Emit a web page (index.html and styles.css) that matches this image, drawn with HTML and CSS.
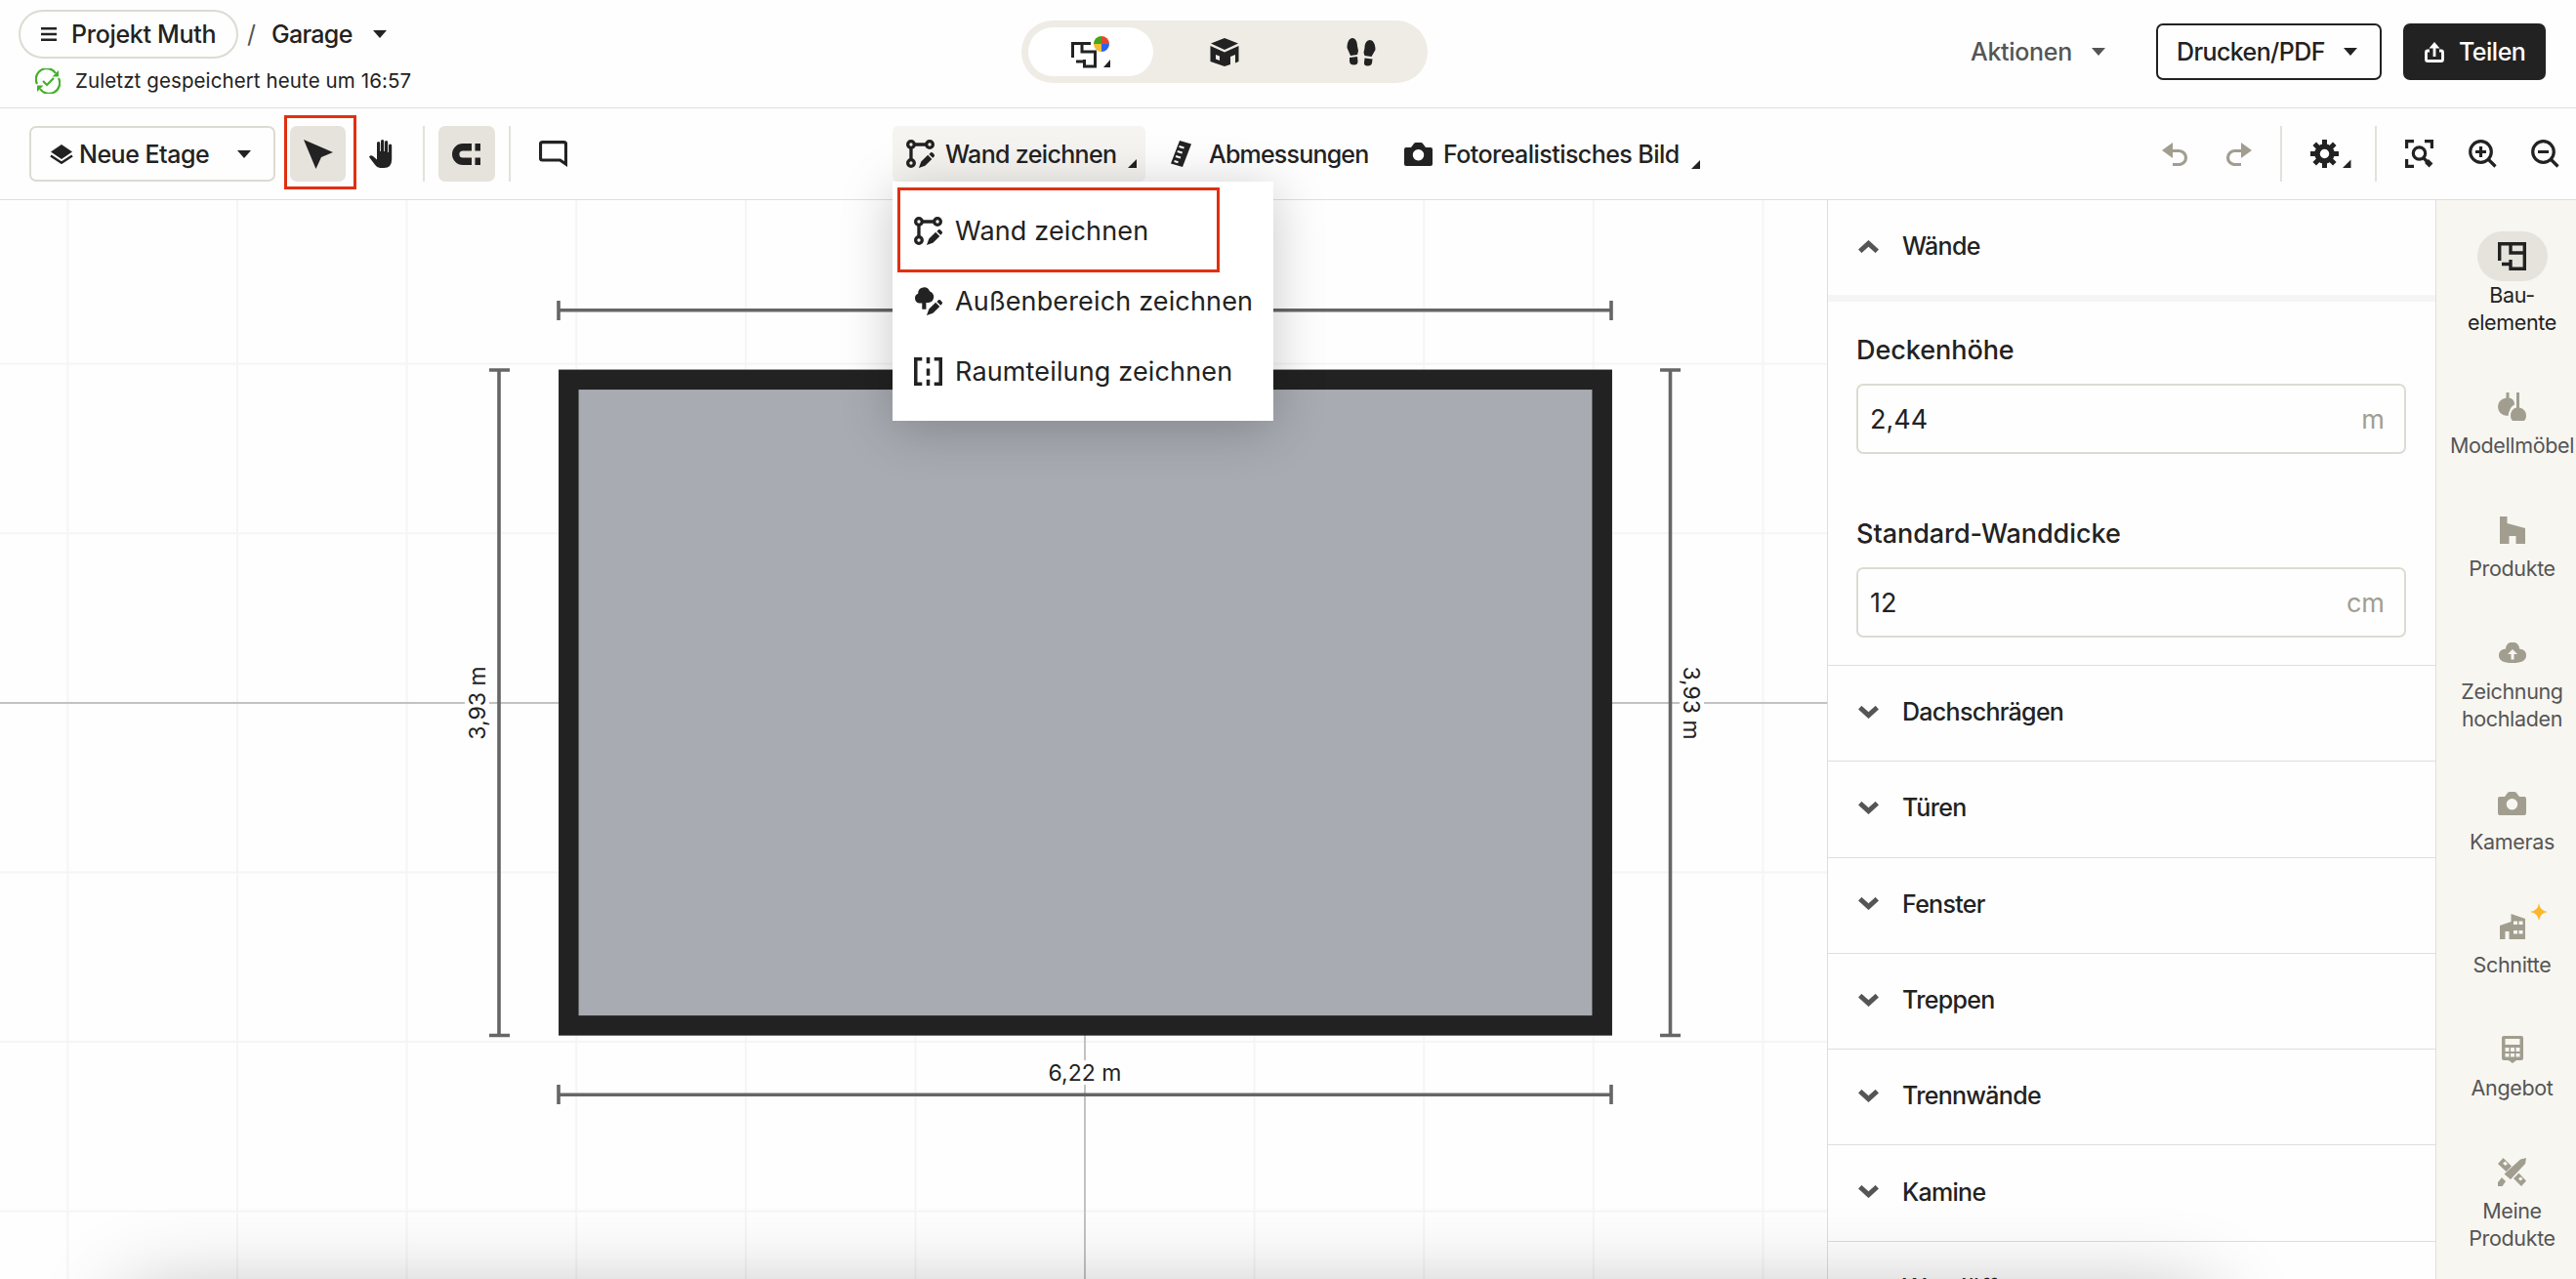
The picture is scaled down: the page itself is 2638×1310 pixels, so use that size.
FILE: index.html
```html
<!DOCTYPE html>
<html lang="de">
<head>
    <meta charset="UTF-8">
    <meta name="viewport" content="width=device-width, initial-scale=1.0">
    <title>Projekt Muth - Garage</title>
    <link rel="stylesheet" href="styles.css">
</head>
<body>
    <!-- Shared icons -->
    <svg class="sprite">
        <symbol id="caret" viewBox="0 0 14 8"><path d="M0 0h14L7 8z"/></symbol>
        <symbol id="corner" viewBox="0 0 9 9"><path d="M9 0v9H0z"/></symbol>
        <symbol id="pencil" viewBox="0 0 28 28">
            <path d="M12.5 28l2.300-6.200 6.600-6.600 4 4-6.700 6.600zM22.600 14.500l1.600-1.600q.9-.8 1.800 0l1.700 1.800q.9 1 0 1.900l-1.400 1.500z"/>
        </symbol>
        <symbol id="wall" viewBox="0 0 28 28">
            <g fill="none" stroke="currentColor" stroke-width="3.200">
                <circle cx="4.800" cy="4.800" r="3.200"/><circle cx="23.200" cy="4.800" r="3.200"/><circle cx="4.800" cy="23.200" r="3.200"/>
                <path d="M8 4.800h12.500M4.800 8v12.500"/>
            </g>
            <use href="#pencil" width="28" height="28"/>
        </symbol>
        <symbol id="camera" viewBox="0 0 29 24">
            <path fill-rule="evenodd" d="M2 5h5l3-4q.7-1 2-1h5q1.300 0 2 1l3 4h5q2 0 2 2v15q0 2-2 2H2q-2 0-2-2V7q0-2 2-2zM14.500 7a5.700 5.700 0 1 0 .01 0z"/>
        </symbol>
        <symbol id="down" viewBox="0 0 21 13"><path d="M1.700 1.700l8.800 8L19.300 1.700" fill="none" stroke="currentColor" stroke-width="5"/></symbol>
    </svg>

    <!-- Header -->
    <header class="header">
        <div class="project">
            <div class="crumbs">
                <button class="project-pill">
                    <svg width="16" height="14" viewBox="0 0 16 14"><path d="M0 1.200h16M0 7h16M0 12.800h16" stroke="currentColor" stroke-width="2.400"/></svg>
                    <span>Projekt Muth</span>
                </button>
                <span class="slash">/</span>
                <span class="plan-name">Garage</span>
                <svg class="caret"><use href="#caret"/></svg>
            </div>
            <div class="saved">
                <svg width="26" height="26" viewBox="0 0 26 26">
                    <path d="M2 16A11 11 0 0 1 21 5M24 10A11 11 0 0 1 5 21M8 13l4 4 7-7" fill="none" stroke="currentColor" stroke-width="2.200"/>
                    <path d="M24 2v6.500h-6.500zM2 24v-6.500h6.500z"/>
                </svg>
                <span>Zuletzt gespeichert heute um 16:57</span>
            </div>
        </div>
        <div class="modes">
            <button class="mode active">
                <svg width="40" height="34" viewBox="0 0 40 34">
                    <path d="M1.500 23V8.500H20M11 8.500v8.500h13.500v15H13.500v-7M5 27h8.500M11 8v8" fill="none" stroke="currentColor" stroke-width="3"/>
                    <path d="M31 9V1a8 8 0 0 1 8 8z" fill="#e8472f"/><path d="M31 9h8a8 8 0 0 1-8 8z" fill="#2d62ea"/>
                    <path d="M31 9v8a8 8 0 0 1-8-8z" fill="#f5bd32"/><path d="M31 9h-8a8 8 0 0 1 8-8z" fill="#43a51c"/>
                    <path d="M40 25v8h-7z"/>
                </svg>
            </button>
            <button class="mode">
                <svg width="30" height="29" viewBox="0 0 30 29"><path fill-rule="evenodd" d="M15 0l14 5.500L15 12 1 5.500zM.500 8L15 14.500 29.500 8v16l-3.500 1.500V17l-5 2v8L15 29 .500 24zM6 17v4.500l4 1.500v-4.500z"/></svg>
            </button>
            <button class="mode">
                <svg width="30" height="29" viewBox="0 0 30 29">
                    <path d="M.500 10C.500-3.500 11-2.500 11 8l1 5-1 4-7 1zM3 20l8-1 .500 5q0 3.500-4 3.500Q3.500 27.500 3 24z"/>
                    <path d="M29.500 12C29.500-1.500 18.500-.500 18.500 10l-1 5 1 3 7 1zM18.500 20.500l8 1-.5 4q-.5 3-4.500 3-4 0-3.500-3.500z"/>
                </svg>
            </button>
        </div>
        <div class="header-actions">
            <button class="actions">Aktionen <svg class="caret"><use href="#caret"/></svg></button>
            <button class="print">Drucken/PDF <svg class="caret"><use href="#caret"/></svg></button>
            <button class="share">
                <svg width="20" height="21" viewBox="0 0 20 21"><path d="M5 9H3q-1.500 0-1.500 1.500V18q0 1.500 1.500 1.500h14q1.500 0 1.500-1.500v-7.500Q18.500 9 17 9h-2M10 15V4" fill="none" stroke="currentColor" stroke-width="2.800"/><path d="M10 0l5.500 6.500h-11z"/></svg>
                <span>Teilen</span>
            </button>
        </div>
    </header>

    <!-- Toolbar -->
    <nav class="toolbar">
        <div class="tools-left">
            <button class="floor">
                <svg width="24" height="20" viewBox="0 0 24 20"><path d="M12 0l11 7.500L12 15 1 7.500z"/><path d="M1 11.500l11 7.200 11-7.200" fill="none" stroke="currentColor" stroke-width="2.500"/></svg>
                <span>Neue Etage</span>
                <svg class="caret"><use href="#caret"/></svg>
            </button>
            <button class="tool select">
                <svg width="30" height="30" viewBox="0 0 30 30"><path d="M0 0l30 13-12 5-5.500 12z"/></svg>
                <span class="marker"></span>
            </button>
            <button class="tool hand">
                <svg width="26" height="29" viewBox="0 0 26 29"><path d="M8 15V3.500a1.600 1.600 0 0 1 3.200 0V12h.800V1.600a1.600 1.600 0 0 1 3.200 0V12h.800V2.600a1.600 1.600 0 0 1 3.200 0V13h.800V6a1.600 1.600 0 0 1 3.200 0v14q0 9-8 9h-4q-3 0-5-3L.500 18.500q-.8-1.500.5-2 1.500-.5 3 .5l4 3.500z"/></svg>
            </button>
            <span class="divider"></span>
            <button class="tool magnet">
                <svg width="30" height="22" viewBox="0 0 30 22"><path d="M20 3.700H11a7.300 7.300 0 0 0 0 14.600h9M23.500 3.700H29M23.500 18.300H29" fill="none" stroke="currentColor" stroke-width="7.400"/></svg>
            </button>
            <span class="divider"></span>
            <button class="tool comment">
                <svg width="29" height="27" viewBox="0 0 29 27"><path d="M3.500 1.700h22q2 0 2 2V24l-6-4h-18q-2 0-2-2V3.700q0-2 2-2z" fill="none" stroke="currentColor" stroke-width="3.200"/></svg>
            </button>
        </div>
        <div class="tools-center">
            <div class="draw-wrap">
                <button class="draw">
                    <svg width="29" height="29"><use href="#wall"/></svg>
                    <span>Wand zeichnen</span>
                    <svg class="corner"><use href="#corner"/></svg>
                </button>
                <!-- Dropdown -->
                <ul class="menu">
                    <li>
                        <svg width="29" height="29"><use href="#wall"/></svg>
                        <span>Wand zeichnen</span>
                        <span class="marker"></span>
                    </li>
                    <li>
                        <svg width="29" height="29" viewBox="0 0 28 28"><path d="M8 22v-6H5a5 5 0 0 1-1-9.500A6 6 0 0 1 15.500 4a6 6 0 0 1 3 9Q17 15.500 12 15.500V22z"/><use href="#pencil" width="28" height="28"/></svg>
                        <span>Außenbereich zeichnen</span>
                    </li>
                    <li>
                        <svg width="29" height="29" viewBox="0 0 28 28"><path d="M8 1.700H1.700v24.600H8M20 1.700h6.300v24.600H20M14 0v6M14 11v7M14 22v6" fill="none" stroke="currentColor" stroke-width="3.400"/></svg>
                        <span>Raumteilung zeichnen</span>
                    </li>
                </ul>
            </div>
            <button class="measure">
                <svg width="21" height="27" viewBox="0 0 21 27"><path d="M9 0l12 3.500L12 27 0 23.500z"/><path d="M8.500 6l5 1.500M6.700 11l5 1.500M5 16l5 1.500M3.500 21l4 1.200" stroke="#fff" stroke-width="2"/></svg>
                <span>Abmessungen</span>
            </button>
            <button class="photo">
                <svg width="29" height="24"><use href="#camera"/></svg>
                <span>Fotorealistisches Bild</span>
                <svg class="corner"><use href="#corner"/></svg>
            </button>
        </div>
        <div class="tools-right">
            <svg class="history" width="27" height="24" viewBox="0 0 27 24"><path d="M8 8.500h9.500a7 7 0 0 1 0 14H11" fill="none" stroke="currentColor" stroke-width="3.200"/><path d="M11 0v16L0 8z"/></svg>
            <svg class="history redo" width="27" height="24" viewBox="0 0 27 24"><path d="M19 8.500H9.500a7 7 0 0 0 0 14H16" fill="none" stroke="currentColor" stroke-width="3.200"/><path d="M16 0v16l11-8z"/></svg>
            <span class="divider"></span>
            <svg class="gear" width="42" height="29" viewBox="0 0 42 29">
                <circle cx="14.500" cy="14.500" r="7.500" fill="none" stroke="currentColor" stroke-width="5.500"/>
                <path d="M14.500 0v6M14.500 23v6M0 14.500h6M23 14.500h6M4.200 4.200l4.500 4.500M20.300 20.300l4.500 4.500M4.200 24.800l4.500-4.500M20.300 8.700l4.500-4.500" stroke="currentColor" stroke-width="5"/>
                <path d="M41.500 20.500v8.500H33z"/>
            </svg>
            <span class="divider"></span>
            <svg class="line-icon fit" width="29" height="29" viewBox="0 0 29 29"><path d="M1.600 9V1.600H9M20 1.600h7.400V9M1.600 20v7.400H9"/><circle cx="14.500" cy="14" r="6.200"/><path d="M19 19l3.500 3.500"/><path d="M22 22l4.500 4.500" stroke-width="5.500"/></svg>
            <svg class="line-icon zoom-in" width="29" height="29" viewBox="0 0 29 29"><circle cx="12.500" cy="12.500" r="10.800"/><path d="M20 20l7.500 7.500M12.500 7v11M7 12.500h11"/></svg>
            <svg class="line-icon" width="29" height="29" viewBox="0 0 29 29"><circle cx="12.500" cy="12.500" r="10.800"/><path d="M20 20l7.500 7.500M7 12.500h11"/></svg>
        </div>
    </nav>

    <main class="workspace">
        <!-- Floor plan -->
        <svg class="plan" viewBox="0 205 1871 1105">
            <defs>
                <pattern id="grid" width="173.600" height="173.600" patternUnits="userSpaceOnUse" x="68.400" y="198">
                    <path d="M1 0v173.600M0 1h173.600" stroke="#f5f5f5" stroke-width="2"/>
                </pattern>
            </defs>
            <rect class="grid" y="205" width="1871" height="1105" fill="url(#grid)"/>
            <path class="axis" d="M0 720H1871M1111 1060V1310"/>
            <rect class="room" x="582.300" y="388.800" width="1058.400" height="661.600"/>
            <g class="dims">
                <path d="M572 317.800H1650M572 1121.300H1650M511 379V1060M1710.500 379V1060"/>
                <path d="M572 308v20M1650 308v20M572 1111v20M1650 1111v20M501 379h21M501 1060.500h21M1700 379h21M1700 1060.500h21"/>
            </g>
            <rect class="gap" x="1069" y="1086" width="84" height="25"/>
            <rect class="gap" x="476" y="680" width="25" height="80"/>
            <rect class="gap" x="1720" y="680" width="25" height="80"/>
            <text class="length" x="1111" y="1107">6,22 m</text>
            <text class="length" transform="translate(497 720) rotate(-90)">3,93 m</text>
            <text class="length" transform="translate(1724 720) rotate(90)">3,93 m</text>
        </svg>

        <!-- Properties -->
        <aside class="panel">
            <div class="section open">
                <svg class="chevron"><use href="#down"/></svg>
                <span>Wände</span>
            </div>
            <div class="fields">
                <label>Deckenhöhe</label>
                <div class="field"><span>2,44</span><span class="unit">m</span></div>
                <label>Standard-Wanddicke</label>
                <div class="field"><span>12</span><span class="unit">cm</span></div>
            </div>
            <div class="section"><svg class="chevron"><use href="#down"/></svg><span>Dachschrägen</span></div>
            <div class="section"><svg class="chevron"><use href="#down"/></svg><span>Türen</span></div>
            <div class="section"><svg class="chevron"><use href="#down"/></svg><span>Fenster</span></div>
            <div class="section"><svg class="chevron"><use href="#down"/></svg><span>Treppen</span></div>
            <div class="section"><svg class="chevron"><use href="#down"/></svg><span>Trennwände</span></div>
            <div class="section"><svg class="chevron"><use href="#down"/></svg><span>Kamine</span></div>
            <div class="section"><svg class="chevron"><use href="#down"/></svg><span>Wandöffnungen</span></div>
        </aside>

        <!-- Category rail -->
        <nav class="rail">
            <a class="rail-item current">
                <span class="rail-icon"><svg width="29" height="29" viewBox="0 0 29 29"><path d="M1.700 19V1.700H27.300V27.300H13V18M4 22.500h9M13 2v9h14" fill="none" stroke="currentColor" stroke-width="3.400"/></svg></span>
                <span>Bau-<br>elemente</span>
            </a>
            <a class="rail-item">
                <span class="rail-icon"><svg width="29" height="29" viewBox="0 0 29 29"><path d="M8.500 0h3v5.500q5.500 1 5.500 7-5 2-6.500 11.500Q0 23.500 0 14.500q0-7 8.500-9zM19 0h3v15.500q7 1.500 7 8.500 0 3-2 5H15q-2-2-2-5 0-7 6-8.500z"/></svg></span>
                <span>Modellmöbel</span>
            </a>
            <a class="rail-item">
                <span class="rail-icon"><svg width="26" height="28" viewBox="0 0 26 28"><path d="M0 0h7.500v7L26 12v16h-9.500v-8H9.500v8H0z"/></svg></span>
                <span>Produkte</span>
            </a>
            <a class="rail-item">
                <span class="rail-icon"><svg width="28" height="21" viewBox="0 0 28 21"><path fill-rule="evenodd" d="M7 6.500a7 7 0 0 1 14 0q7 .500 7 7Q28 21 14 21T0 13.500q0-6.500 7-7zM14 7l-5 5h3.500v5.500h3V12H19z"/></svg></span>
                <span>Zeichnung<br>hochladen</span>
            </a>
            <a class="rail-item">
                <span class="rail-icon"><svg width="29" height="24"><use href="#camera"/></svg></span>
                <span>Kameras</span>
            </a>
            <a class="rail-item">
                <span class="rail-icon"><svg width="26" height="26" viewBox="0 0 26 26"><path fill-rule="evenodd" d="M0 12l11.500-4V0L26 5v21H9.500v-8h-4v8H0zM14 7.500v3.500h4V7.500zM19.500 7.500v3.500h4V7.500zM14 17v3.500h4V17zM19.500 17v3.500h4V17z"/></svg>
                    <svg class="star" width="18" height="18" viewBox="0 0 18 18"><path d="M9 0q1 8 9 9-8 1-9 9-1-8-9-9 8-1 9-9z"/></svg>
                </span>
                <span>Schnitte</span>
            </a>
            <a class="rail-item">
                <span class="rail-icon"><svg width="22" height="28" viewBox="0 0 22 28"><path fill-rule="evenodd" d="M2 0h18q2 0 2 2v21q0 2-2 2h-5l-4 3-4-3H2q-2 0-2-2V2q0-2 2-2zM3.500 3v6h15V3zM3.500 12v4h4v-4zM9 12v4h4v-4zM14.500 12v4h4v-4zM3.500 18v3.500h4V18zM9 18v3.500h4V18zM14.500 18v3.500h4V18z"/></svg></span>
                <span>Angebot</span>
            </a>
            <a class="rail-item">
                <span class="rail-icon"><svg width="29" height="29" viewBox="0 0 29 29"><path fill-rule="evenodd" d="M0 6l5.500-6L14 8.500 8.500 14zM5 5.500l2.500 2.500 2.500-2-2.500-2.500zM16 21l5.500-5.500 7.500 8-5 5.500zM21 21l2 2.500 2.500-2-2-2z"/><path d="M29 0l-1 6-15 16-6.500-5.500L23 1.500zM0 25l4-5 4 4-3.500 5H0z"/></svg></span>
                <span>Meine<br>Produkte</span>
            </a>
        </nav>
        <div class="bottom-shade"></div>
    </main>
</body>
</html>
```
FILE: styles.css
```css
* {
    box-sizing: border-box;
}

body {
    margin: 0;
    width: 2638px;
    height: 1310px;
    overflow: hidden;
    display: flex;
    flex-direction: column;
    background: #fefefe;
    color: #222;
    font-family: Inter, "Open Sans", sans-serif;
    font-size: 25px;
}

button {
    display: flex;
    align-items: center;
    padding: 0;
    border: none;
    background: none;
    color: inherit;
    font: inherit;
    font-weight: 500;
    letter-spacing: -0.5px;
    white-space: nowrap;
}

svg {
    flex-shrink: 0;
    fill: currentColor;
}

.sprite {
    position: absolute;
    width: 0;
    height: 0;
}

.caret {
    width: 14px;
    height: 8px;
}

.corner {
    width: 9px;
    height: 9px;
}

.line-icon {
    fill: none;
    stroke: currentColor;
    stroke-width: 3.2;
}

/* Header */
.header {
    display: flex;
    height: 111px;
    border-bottom: 1px solid #dedede;
}

.project {
    width: 1046px;
    padding: 10px 0 0 19px;
}

.crumbs {
    display: flex;
    align-items: center;
    height: 50px;
    font-weight: 500;
}

.project-pill {
    width: 225px;
    height: 50px;
    gap: 15px;
    padding-left: 21px;
    border: 2px solid #dcdbd3;
    border-radius: 25px;
    letter-spacing: -0.3px;
}

.slash {
    width: 34px;
    padding-left: 9px;
    font-weight: 400;
    color: #555;
}

.plan-name {
    width: 104px;
    letter-spacing: -0.7px;
}

.saved {
    display: flex;
    align-items: center;
    gap: 15px;
    height: 45px;
    padding-left: 17px;
    font-size: 20.5px;
    letter-spacing: 0.1px;
}

.saved svg {
    color: #43b02a;
}

.modes {
    display: flex;
    align-items: center;
    gap: 5px;
    width: 416px;
    height: 64px;
    margin-top: 21px;
    padding: 0 1px 0 7px;
    border-radius: 32px;
    background: #efece6;
}

.mode {
    justify-content: center;
    flex: 1;
    height: 50px;
}

.mode.active {
    flex: none;
    width: 128px;
    border-radius: 25px;
    background: #fff;
}

.header-actions {
    display: flex;
    align-items: center;
    height: 58px;
    margin: 24px 31px 0 auto;
}

.actions {
    width: 190px;
    gap: 20px;
    color: #555;
    letter-spacing: -0.3px;
}

.print {
    justify-content: space-between;
    width: 231px;
    height: 58px;
    margin-right: 22px;
    padding: 0 23px 0 19px;
    border: 2px solid #222;
    border-radius: 7px;
    letter-spacing: -0.6px;
}

.share {
    gap: 15px;
    width: 146px;
    height: 58px;
    padding-left: 22px;
    border-radius: 7px;
    background: #222;
    color: #fff;
}

/* Toolbar */
.toolbar {
    display: flex;
    align-items: center;
    height: 94px;
    border-bottom: 1px solid #dedede;
    padding-left: 30px;
}

.tools-left,
.tools-center,
.tools-right {
    display: flex;
    align-items: center;
    height: 57px;
}

.tools-left {
    width: 884px;
}

.floor {
    width: 252px;
    height: 57px;
    gap: 6px;
    padding: 0 23px 0 19px;
    border: 2px solid #dcdbd3;
    border-radius: 7px;
}

.floor .caret {
    margin-left: auto;
}

.tool {
    position: relative;
    justify-content: center;
    width: 57px;
    height: 57px;
    border-radius: 7px;
}

.select {
    margin-left: 15px;
    background: #e5e3db;
}

.hand {
    margin: 0 14px 0 8px;
}

.magnet {
    width: 58px;
    margin: 0 14px;
    background: #e5e3db;
}

.comment {
    margin-left: 15px;
}

.divider {
    width: 2px;
    height: 57px;
    background: #e2e1dc;
}

.marker {
    position: absolute;
    border: 3px solid #e03010;
}

.tool .marker {
    inset: -11px -11px -8px -6px;
}

.draw-wrap {
    position: relative;
    width: 285px;
}

.draw {
    position: relative;
    width: 259px;
    height: 57px;
    gap: 11px;
    padding-left: 14px;
    border-radius: 6px;
    background: #f5f4f1;
    letter-spacing: -0.65px;
}

.draw .corner {
    align-self: flex-end;
    margin: 0 0 14px 1px;
}

.menu {
    position: absolute;
    z-index: 2;
    top: 57px;
    left: 0;
    width: 390px;
    height: 245px;
    margin: 0;
    padding: 15px 0 0;
    list-style: none;
    background: #fff;
    box-shadow: 0 8px 50px rgba(0, 0, 0, 0.22);
    font-size: 27px;
    letter-spacing: 0.15px;
}

.menu li {
    position: relative;
    display: flex;
    align-items: center;
    gap: 13px;
    height: 72px;
    padding: 0 0 1px 22px;
    white-space: nowrap;
}

.menu .marker {
    inset: -9px 55px -6px 5px;
}

.measure {
    width: 239px;
    gap: 18px;
    letter-spacing: -0.8px;
}

.photo {
    gap: 11px;
    letter-spacing: -0.55px;
}

.photo .corner {
    align-self: flex-end;
    margin-left: 1px;
}

.tools-right {
    margin: 0 17px 0 auto;
}

.history {
    color: #a19e90;
    margin-right: 38px;
}

.redo {
    margin-right: 29px;
}

.gear {
    margin: 0 24px 0 29px;
}

.fit {
    margin: 0 36px 0 29px;
}

.zoom-in {
    margin-right: 35px;
}

/* Workspace */
.workspace {
    position: relative;
    display: flex;
    height: 1105px;
    overflow: hidden;
}

.plan {
    width: 1871px;
    height: 1105px;
}

.axis {
    stroke: #c2c2c2;
    stroke-width: 2;
}

.room {
    fill: #a8abb2;
    stroke: #222;
    stroke-width: 20.5;
}

.dims {
    stroke: #666;
    stroke-width: 3.6;
}

.gap {
    fill: #fefefe;
}

.length {
    font-size: 23px;
    text-anchor: middle;
}

/* Properties panel */
.panel {
    width: 623px;
    border-left: 1px solid #dcdcdc;
    background: #fefefe;
}

.section {
    display: flex;
    align-items: center;
    gap: 24px;
    height: 98.3px;
    padding: 0 0 3px 31px;
    border-top: 1px solid #dedede;
    font-weight: 500;
    font-size: 25px;
    letter-spacing: -0.7px;
}

.section.open {
    height: 104px;
    padding-bottom: 3px;
    border-top: none;
    border-bottom: 7px solid #f5f5f6;
}

.chevron {
    width: 21px;
    height: 13px;
    color: #555;
}

.open .chevron {
    transform: rotate(180deg);
}

.fields {
    height: 372px;
    padding: 29px 30px 0 29px;
}

.fields label {
    display: block;
    height: 55px;
    line-height: 41px;
    font-size: 27px;
    font-weight: 500;
    letter-spacing: -0.05px;
}

.field {
    display: flex;
    align-items: center;
    justify-content: space-between;
    height: 72px;
    margin-bottom: 61px;
    padding: 0 20px 0 12px;
    border: 2px solid #dcdbd3;
    border-radius: 7px;
    font-size: 27px;
}

.unit {
    color: #a29e92;
}

/* Rail */
.rail {
    display: flex;
    flex-direction: column;
    gap: 47px;
    width: 144px;
    padding: 32px 0 0 12px;
    border-left: 1px solid #dfdfdb;
    background: #f7f6f1;
}

.rail-item {
    display: flex;
    flex-direction: column;
    align-items: center;
    font-size: 21.5px;
    letter-spacing: -0.35px;
    line-height: 28px;
    text-align: center;
    color: #555;
}

.rail-icon {
    position: relative;
    display: flex;
    align-items: center;
    justify-content: center;
    width: 72px;
    height: 51px;
    border-radius: 26px;
    color: #a19e90;
}

.current {
    color: #222;
}

.current .rail-icon {
    background: #e5e3db;
    color: #222;
}

.star {
    position: absolute;
    top: 2px;
    right: 0;
    color: #fdb62b;
}

/* Soft shade along the bottom edge */
.bottom-shade {
    position: absolute;
    top: 1125px;
    left: 130px;
    width: 2130px;
    height: 100px;
    box-shadow: 0 0 90px rgba(0, 0, 0, 0.3);
}
```
